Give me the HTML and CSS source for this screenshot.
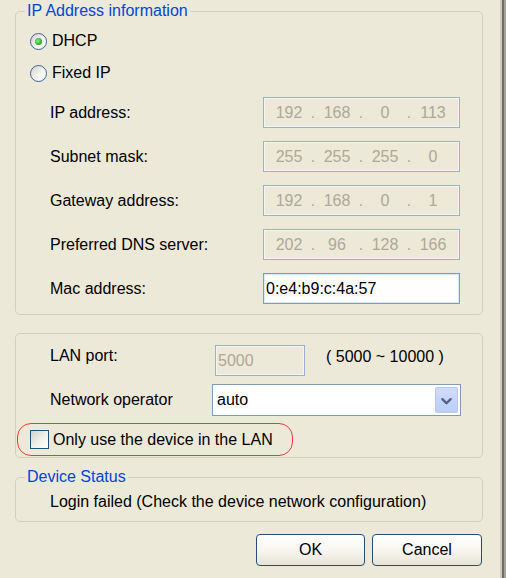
FILE: index.html
```html
<!DOCTYPE html>
<html>
<head>
<meta charset="utf-8">
<link rel="stylesheet" href="styles.css">
</head>
<body>
<div class="window">
  <div class="page">
    <fieldset class="group group-ip">
      <legend>IP Address information</legend>
      <div class="options">
        <div class="radio-row"><span class="radio checked"></span><span>DHCP</span></div>
        <div class="radio-row"><span class="radio"></span><span>Fixed IP</span></div>
      </div>
      <div class="fields">
        <div class="field-row">
          <span class="label">IP address:</span>
          <div class="ip-box"><span class="seg">192</span><span class="dot">.</span><span class="seg">168</span><span class="dot">.</span><span class="seg">0</span><span class="dot">.</span><span class="seg">113</span></div>
        </div>
        <div class="field-row">
          <span class="label">Subnet mask:</span>
          <div class="ip-box"><span class="seg">255</span><span class="dot">.</span><span class="seg">255</span><span class="dot">.</span><span class="seg">255</span><span class="dot">.</span><span class="seg">0</span></div>
        </div>
        <div class="field-row">
          <span class="label">Gateway address:</span>
          <div class="ip-box"><span class="seg">192</span><span class="dot">.</span><span class="seg">168</span><span class="dot">.</span><span class="seg">0</span><span class="dot">.</span><span class="seg">1</span></div>
        </div>
        <div class="field-row">
          <span class="label">Preferred DNS server:</span>
          <div class="ip-box"><span class="seg">202</span><span class="dot">.</span><span class="seg">96</span><span class="dot">.</span><span class="seg">128</span><span class="dot">.</span><span class="seg">166</span></div>
        </div>
        <div class="field-row">
          <span class="label">Mac address:</span>
          <div class="text-box">0:e4:b9:c:4a:57</div>
        </div>
      </div>
    </fieldset>

    <div class="group group-net">
      <div class="net-row lan-row">
        <span class="lan-label">LAN port:</span>
        <div class="port-box">5000</div>
        <span class="range">( 5000 ~ 10000 )</span>
      </div>
      <div class="net-row op-row">
        <span class="op-label">Network operator</span>
        <div class="select">
          <span>auto</span>
          <span class="select-btn">
            <svg width="23" height="26" viewBox="0 0 23 26"><polyline points="7,11 11.5,15.5 16,11" fill="none" stroke="#4d6185" stroke-width="2.6" stroke-linecap="round" stroke-linejoin="round"/></svg>
          </span>
        </div>
      </div>
      <div class="lan-only">
        <span class="checkbox"></span>
        <span>Only use the device in the LAN</span>
      </div>
    </div>

    <fieldset class="group group-status">
      <legend>Device Status</legend>
      <div class="status">Login failed (Check the device network configuration)</div>
    </fieldset>

    <div class="buttons">
      <button class="btn btn-ok">OK</button>
      <button class="btn btn-cancel">Cancel</button>
    </div>
  </div>
  <div class="edge"></div>
</div>
</body>
</html>
```
FILE: styles.css
```css
* { box-sizing: border-box; }

body {
  margin: 0;
  background: #ece9d8;
  font-family: "Liberation Sans", Arial, sans-serif;
  font-size: 16px;
  line-height: 18px;
  color: #000;
}

.window {
  display: flex;
  height: 578px;
}

.page {
  width: 500px;
  padding: 2px 0 0 15px;
}

.edge {
  width: 6px;
  background: linear-gradient(to right, #cdcabb 0 2px, #6f6e68 2px 4px, #a6a49a 4px 6px);
}

.group {
  width: 468px;
  margin: 0;
  border: 1px solid #d0d0bf;
  border-radius: 5px;
}

fieldset.group {
  padding: 0 0 10px 0;
  min-width: 0;
}

.group legend {
  margin-left: 9px;
  padding: 0 2px;
  color: #0046d5;
  line-height: 18px;
}

/* IP group */
.options {
  padding: 5px 0 0 14px;
}

.radio-row {
  height: 32px;
  display: flex;
  align-items: center;
  gap: 5px;
}

.radio {
  width: 17px;
  height: 17px;
  border-radius: 50%;
  border: 1px solid #3d6596;
  background: linear-gradient(135deg, #d3d2ca, #f4f4f0 55%, #fff);
  display: flex;
  align-items: center;
  justify-content: center;
}

.radio.checked::after {
  content: "";
  width: 7px;
  height: 7px;
  border-radius: 50%;
  background: radial-gradient(circle at 40% 40%, #8cec86, #25a824 70%);
}

.fields {
  margin-top: 8px;
  padding-left: 34px;
  display: flex;
  flex-direction: column;
  gap: 13px;
}

.field-row {
  display: flex;
  align-items: center;
  height: 31px;
}

.field-row .label {
  width: 213px;
}

.ip-box {
  width: 197px;
  height: 31px;
  display: flex;
  align-items: center;
  padding-left: 5px;
  border: 1px solid #98b0d4;
  box-shadow: inset 0 0 0 1px #f6f5ef;
  color: #aca899;
}

.seg {
  width: 40px;
  text-align: center;
}

.dot {
  width: 8px;
  text-align: center;
}

.text-box {
  width: 197px;
  height: 31px;
  display: flex;
  align-items: center;
  padding-left: 2px;
  background: #fff;
  border: 1px solid #7f9db9;
  box-shadow: inset 0 0 0 1px #dfe7f3;
}

/* Network group */
.group-net {
  margin-top: 18px;
  padding: 11px 0 1px 0;
}

.net-row {
  display: flex;
  padding-left: 34px;
}

.lan-row {
  height: 31px;
  align-items: flex-start;
  margin-bottom: 8px;
}

.lan-label {
  width: 165px;
  margin-top: 2px;
}

.port-box {
  width: 90px;
  height: 31px;
  padding-left: 2px;
  display: flex;
  align-items: center;
  border: 1px solid #98b0d4;
  box-shadow: inset 0 0 0 1px #f6f5ef;
  color: #aca899;
}

.range {
  margin-left: 21px;
  margin-top: 3px;
}

.op-row {
  height: 32px;
  align-items: center;
  margin-bottom: 7px;
}

.op-label {
  width: 162px;
}

.select {
  width: 249px;
  height: 32px;
  display: flex;
  align-items: center;
  justify-content: space-between;
  padding: 2px 2px 2px 4px;
  background: #fff;
  border: 1px solid #7f9db9;
}

.select-btn {
  width: 23px;
  height: 26px;
  border: 1px solid #b7c8f3;
  border-radius: 2px;
  background: linear-gradient(#d0dcfb, #bccdf8);
  display: flex;
}

.lan-only {
  margin-left: 1px;
  width: 276px;
  height: 33px;
  display: flex;
  align-items: center;
  gap: 4px;
  padding-left: 12px;
  border: 1px solid #f03838;
  border-radius: 14px;
}

.checkbox {
  width: 19px;
  height: 19px;
  border: 1px solid #1f4f80;
  background: linear-gradient(135deg, #d4d3cb, #f3f3ef 60%, #fff);
}

/* Status group */
.group-status {
  margin-top: 10px !important;
}

fieldset.group-status {
  padding-top: 7px;
}

.status {
  padding-left: 34px;
}

/* Buttons */
.buttons {
  width: 467px;
  margin-top: 12px;
  display: flex;
  justify-content: flex-end;
  gap: 7px;
}

.btn {
  height: 32px;
  font: inherit;
  color: #000;
  border: 1px solid #264d7c;
  border-radius: 4px;
  background: linear-gradient(#ffffff, #f7f6f1 50%, #e6e3d7);
  padding: 0;
}

.btn-ok { width: 109px; }
.btn-cancel { width: 110px; }
```
